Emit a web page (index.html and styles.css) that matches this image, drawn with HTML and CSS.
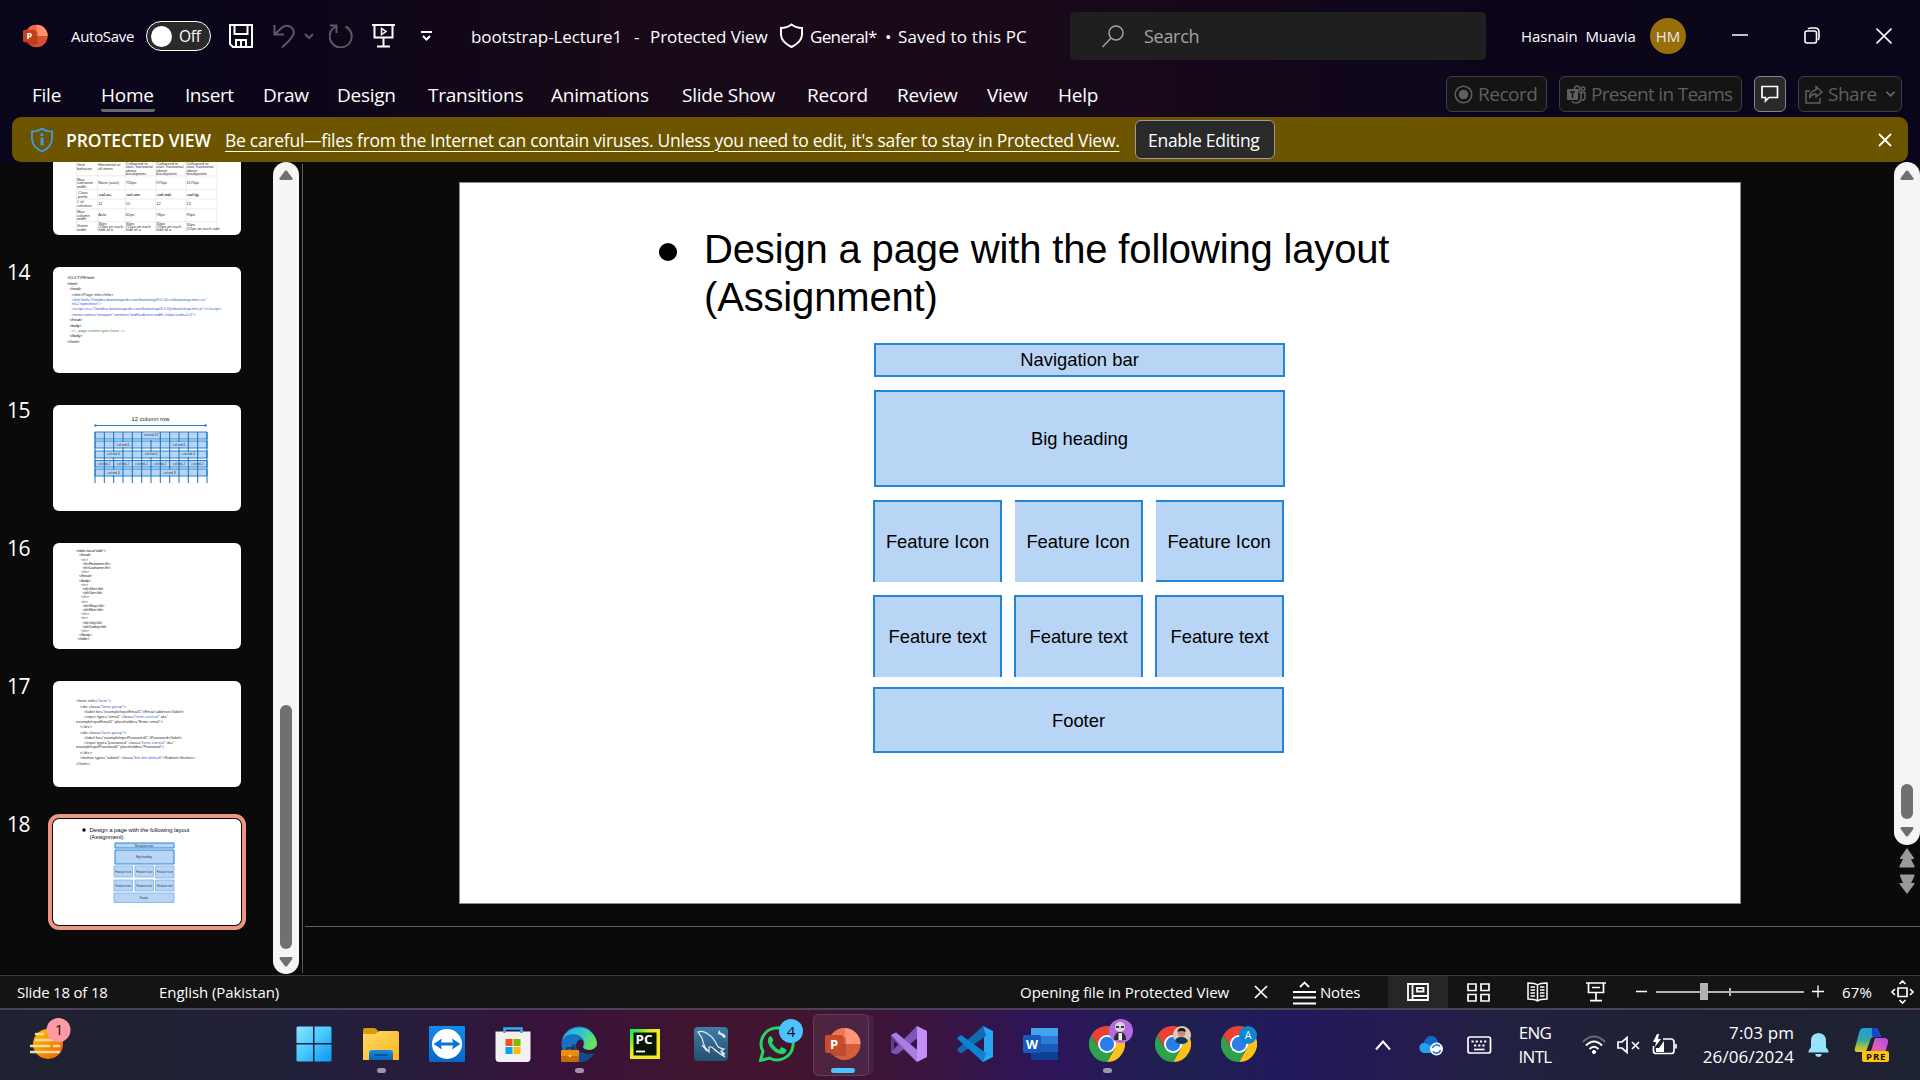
FILE: index.html
```html
<!DOCTYPE html>
<html lang="en">
<head>
<meta charset="utf-8">
<title>bootstrap-Lecture1 - PowerPoint</title>
<link rel="stylesheet" href="styles.css">
</head>
<body>
<svg class="defs" width="0" height="0" aria-hidden="true">
  <defs>
    <linearGradient id="gWin" x1="0" y1="0" x2="1" y2="1"><stop offset="0" stop-color="#8be3ff"/><stop offset=".5" stop-color="#45c8ff"/><stop offset="1" stop-color="#0b93f5"/></linearGradient>
    <linearGradient id="gFolder" x1="0" y1="0" x2="1" y2="1"><stop offset="0" stop-color="#ffd968"/><stop offset="1" stop-color="#f9b51c"/></linearGradient>
    <linearGradient id="gFolderBlue" x1="0" y1="0" x2="0" y2="1"><stop offset="0" stop-color="#1a8fe0"/><stop offset="1" stop-color="#0d62b5"/></linearGradient>
    <linearGradient id="gTv" x1="0" y1="0" x2="0" y2="1"><stop offset="0" stop-color="#0f8cf0"/><stop offset="1" stop-color="#0766c8"/></linearGradient>
    <linearGradient id="gEdge" x1="0" y1="0" x2="1" y2=".5"><stop offset="0" stop-color="#28a8f0"/><stop offset=".5" stop-color="#32c4cf"/><stop offset="1" stop-color="#66e35c"/></linearGradient>
    <linearGradient id="gPc" x1="0" y1="0" x2="1" y2="1"><stop offset="0" stop-color="#21d789"/><stop offset=".15" stop-color="#3df03a"/><stop offset=".4" stop-color="#e8ee2a"/><stop offset="1" stop-color="#f5e722"/></linearGradient>
    <linearGradient id="gSql" x1="0" y1="0" x2="0" y2="1"><stop offset="0" stop-color="#3f7ca8"/><stop offset="1" stop-color="#244f70"/></linearGradient>
    <linearGradient id="gSun" x1="0" y1="0" x2="1" y2="1"><stop offset="0" stop-color="#ffc400"/><stop offset="1" stop-color="#e85f00"/></linearGradient>
    <linearGradient id="gCopA" x1="0" y1="0" x2="0" y2="1"><stop offset="0" stop-color="#1d9be8"/><stop offset=".5" stop-color="#3aa79b"/><stop offset=".8" stop-color="#a6c63d"/><stop offset="1" stop-color="#f7c52b"/></linearGradient>
    <linearGradient id="gCopB" x1="1" y1="0" x2="0" y2="1"><stop offset="0" stop-color="#a64ce8"/><stop offset=".5" stop-color="#d95cc0"/><stop offset="1" stop-color="#ff6b6b"/></linearGradient>
    <symbol id="chrome" viewBox="0 0 36 36">
      <path d="M18 9H33.6A18 18 0 0 1 18 36L25.8 22.5Z" fill="#fcc21b"/>
      <path d="M2.4 9L10.2 22.5L25.8 22.5L18 36A18 18 0 0 1 2.4 9Z" fill="#2fa04c"/>
      <path d="M2.4 9A18 18 0 0 1 33.6 9H18L10.2 22.5Z" fill="#ea4335"/>
      <circle cx="18" cy="18" r="9" fill="#fff"/><circle cx="18" cy="18" r="7.2" fill="#2b7de9"/>
    </symbol>
    <symbol id="ppt" viewBox="0 0 36 34">
      <circle cx="19.5" cy="17" r="16" fill="#d35230"/>
      <path d="M19.5 1A16 16 0 0 0 3.5 17H19.5Z" fill="#ed6c47"/>
      <path d="M19.5 1A16 16 0 0 1 35.5 17H19.5Z" fill="#ff8f6b"/>
      <rect x="5" y="10" width="16" height="19" rx="2" fill="#8a2a12" opacity=".45"/>
      <rect x="0" y="8" width="18" height="18" rx="2" fill="#c43e1c"/>
      <text x="9" y="21.5" text-anchor="middle" class="glyph" font-size="13" fill="#fff">P</text>
    </symbol>
    <symbol id="arrowUp" viewBox="0 0 14 10"><path d="M6 .8Q7 0 8 .8L13.5 8.3Q13.6 10 12.5 10H1.5Q.4 10 .5 8.3Z" fill="#6f6f6f"/></symbol>
    <symbol id="arrowDown" viewBox="0 0 14 10"><path d="M6 9.2Q7 10 8 9.2L13.5 1.7Q13.6 0 12.5 0H1.5Q.4 0 .5 1.7Z" fill="#6f6f6f"/></symbol>
  </defs>
</svg>

<div class="window">
  <header class="top">
    <div class="titlebar">
      <svg width="25" height="24" viewBox="0 0 36 34" preserveAspectRatio="none"><use href="#ppt" width="36" height="34"/></svg>
      <span class="t-autosave">AutoSave</span>
      <span class="toggle"><i class="knob"></i><span>Off</span></span>
      <svg width="24" height="24" fill="none" stroke="#fff" stroke-width="2"><path d="M1 1H23V23H4L1 20Z"/><path d="M5.5 1V10H18.5V1M7 23V16H17V23M12 17V23"/></svg>
      <svg width="42" height="24" fill="none" stroke="#5d5965" stroke-width="2"><path d="M1.5 1V10.5H11M1.5 10.5L9 3.5Q13 .5 17 2.5Q21.500 5 20.5 10Q19.5 14 9 23.5M32 10L36 14L40 10"/></svg>
      <svg width="24" height="24" fill="none" stroke="#5d5965" stroke-width="2"><path d="M16.5 2.5A11 11 0 1 1 6 3M1 1.5H7.5V9"/></svg>
      <svg width="24" height="24" fill="none" stroke="#fff" stroke-width="2"><path d="M0 1H23M2.5 1V13.5H20.5V1M11.5 14V22M5 22.5H18"/><path d="M9.5 4.5V10.5L14 7.5Z" stroke-width="1.5"/></svg>
      <svg width="12" height="12" fill="none" stroke="#fff" stroke-width="2"><path d="M0 2H11M2 6L5.5 9.5L9 6"/></svg>
      <span class="doc name">bootstrap-Lecture1</span>
      <span class="doc">-</span>
      <span class="doc mode">Protected View</span>
      <svg width="24" height="26" fill="none" stroke="#fff" stroke-width="2"><path d="M11.5 1.5Q7 5 1 5V12Q1.500 19 11.5 24Q21.500 19 22 12V5Q16 5 11.5 1.5Z"/></svg>
      <span class="doc label">General*</span>
      <span class="doc">•</span>
      <span class="doc saved">Saved to this PC</span>
      <div class="search">
        <svg width="22" height="23" fill="none" stroke="#a3a3a3" stroke-width="1.5"><circle cx="14" cy="8" r="7"/><path d="M9 13L.5 22"/></svg>
        <span>Search</span>
      </div>
      <span class="user">Hasnain&nbsp; Muavia</span>
      <span class="avatar">HM</span>
      <svg width="16" height="18" stroke="#fff" stroke-width="1.5"><path d="M0 8H16"/></svg>
      <svg width="16" height="18" fill="none" stroke="#fff" stroke-width="1.6"><rect x="1" y="4" width="11.5" height="12" rx="2"/><path d="M4 2Q5 1 7 1H11Q15 1 15 5V10Q15 12 14 13"/></svg>
      <svg width="16" height="18" stroke="#fff" stroke-width="1.6"><path d="M.5 1.5L15.5 16.5M15.5 1.5L.5 16.5"/></svg>
    </div>

    <nav class="tabs">
      <span>File</span><span class="active">Home</span><span class="insert">Insert</span><span>Draw</span><span>Design</span><span>Transitions</span><span>Animations</span><span>Slide Show</span><span>Record</span><span>Review</span><span>View</span><span>Help</span>
      <div class="actions">
        <span class="btn b-rec"><svg width="19" height="19"><circle cx="9.5" cy="9.5" r="8.3" fill="none" stroke="#5f5f5f" stroke-width="1.5"/><circle cx="9.5" cy="9.5" r="4.8" fill="#5f5f5f"/></svg>Record</span>
        <span class="btn b-teams"><svg width="19" height="19"><g fill="none" stroke="#5f5f5f" stroke-width="1.5"><circle cx="10" cy="3.5" r="2.5"/><circle cx="16" cy="3.8" r="1.8"/><path d="M12 7.5H18V12Q18 15 15 15.5M12 7H14V14Q13 18 9 18Q6 18 5 16"/></g><rect x="0" y="4" width="11" height="11" rx="1" fill="#5f5f5f"/><path d="M3 7H8M5.5 7V13" stroke="#141414" stroke-width="1.5"/></svg>Present in Teams</span>
        <span class="btn b-comment"><svg width="18" height="18" fill="none" stroke="#fff" stroke-width="1.7"><path d="M1 1.5H16.5V12.5H8L4.5 16V12.5H1Z"/></svg></span>
        <span class="btn b-share"><svg width="18" height="19" fill="none" stroke="#5f5f5f" stroke-width="1.5"><path d="M5 6H1V18H15V13M11 1.5L17 7L11 12V9Q7 9 4.5 13Q5 6 11 5Z"/></svg>Share<svg class="chev" width="9" height="6" fill="none" stroke="#6a6a6a" stroke-width="1.6"><path d="M.5 .8L4.5 4.8L8.5 .8"/></svg></span>
      </div>
    </nav>

    <div class="banner">
      <svg width="23" height="26" fill="none" stroke="#3f9ad6" stroke-width="1.9"><path d="M11 1.5Q7 4.5 1 4.5V12Q1.500 20 11 24.5Q20.500 20 21 12V4.5Q15 4.5 11 1.5Z"/><path d="M11 10.5V18.5M11 6.5V9" stroke-width="3"/></svg>
      <b>PROTECTED VIEW</b>
      <span class="warn">Be careful—files from the Internet can contain viruses. Unless you need to edit, it's safer to stay in Protected View.</span>
      <span class="enable">Enable Editing</span>
      <svg width="14" height="14" stroke="#fff" stroke-width="1.8"><path d="M1 1L13 13M13 1L1 13"/></svg>
    </div>
  </header>

  <main class="work">
    <aside class="thumbs">
      <div class="row first"><span></span>
        <svg class="thumb cut" viewBox="0 0 188 74">
          <g stroke="#e4e4e4" stroke-width=".7" fill="none"><path d="M22.5 0V70M44 0V70M72 0V70M103 0V70M133.5 0V70M165 0V70M22.5 14H165M22.5 28H165M22.5 37.5H165M22.5 47.5H165M22.5 60.5H165"/></g>
          <g class="tiny" font-size="4"><text x="23" y="4">Grid</text><text x="23" y="8">behavior</text><text x="44.5" y="4">Horizontal at</text><text x="44.5" y="8">all times</text>
          <text x="72.5" y="3">Collapsed to</text><text x="72.5" y="6.5">start, horizontal</text><text x="72.5" y="10">above</text><text x="72.5" y="13">breakpoints</text>
          <text x="103.5" y="3">Collapsed to</text><text x="103.5" y="6.5">start, horizontal</text><text x="103.5" y="10">above</text><text x="103.5" y="13">breakpoints</text>
          <text x="134" y="3">Collapsed to</text><text x="134" y="6.5">start, horizontal</text><text x="134" y="10">above</text><text x="134" y="13">breakpoints</text>
          <text x="23" y="19">Max</text><text x="23" y="22.5">container</text><text x="23" y="26">width</text><text x="44.5" y="22.5">None (auto)</text><text x="72.5" y="22.5">750px</text><text x="103.5" y="22.5">970px</text><text x="134" y="22.5">1170px</text>
          <text x="24" y="32">Class</text><text x="24" y="36">prefix</text><g font-weight="700"><text x="44.5" y="34">.col-xs-</text><text x="72.5" y="34">.col-sm-</text><text x="103.5" y="34">.col-md-</text><text x="134" y="34">.col-lg-</text></g>
          <text x="23" y="42"># of</text><text x="23" y="45.5">columns</text><text x="44.5" y="44">12</text><text x="72.5" y="44">12</text><text x="103.5" y="44">12</text><text x="134" y="44">12</text>
          <text x="23" y="52">Max</text><text x="23" y="55.5">column</text><text x="23" y="59">width</text><text x="44.5" y="55">Auto</text><text x="72.5" y="55">62px</text><text x="103.5" y="55">78px</text><text x="134" y="55">95px</text>
          <text x="23" y="66">Gutter</text><text x="23" y="70">width</text><text x="44.5" y="64">30px</text><text x="44.5" y="67">(15px on each</text><text x="44.5" y="70">side of a</text><text x="72.5" y="64">30px</text><text x="72.5" y="67">(15px on each</text><text x="72.5" y="70">side of a</text><text x="103.5" y="64">30px</text><text x="103.5" y="67">(15px on each</text><text x="103.5" y="70">side of a</text><text x="134" y="65">30px</text><text x="134" y="69">(15px on each side</text></g>
        </svg></div>
      <div class="row"><span>14</span>
        <svg class="thumb" viewBox="0 0 188 106"><g class="tiny" font-size="4.2">
          <text x="14" y="11.5" textLength="28">&lt;!DOCTYPE html&gt;</text><text x="14" y="17.5" textLength="11">&lt;html&gt;</text><text x="16.5" y="22.5" textLength="12">&lt;head&gt;</text><text x="18.5" y="28.5" textLength="42">&lt;title&gt;Page title&lt;/title&gt;</text>
          <g fill="#3a68cf"><text x="18.5" y="33.7" textLength="135">&lt;link href="//netdna.bootstrapcdn.com/bootstrap/3.0.0/css/bootstrap.min.css"</text><text x="18.5" y="37.7" textLength="30">rel="stylesheet"&gt;</text><text x="18.5" y="43" textLength="150">&lt;script src="//netdna.bootstrapcdn.com/bootstrap/3.0.0/js/bootstrap.min.js"&gt;&lt;/script&gt;</text><text x="18.5" y="48.7" textLength="124">&lt;meta name="viewport" content="width=device-width, initial-scale=1.0"&gt;</text></g>
          <text x="16.5" y="54" textLength="13">&lt;/head&gt;</text><text x="16.5" y="59.5" textLength="12">&lt;body&gt;</text><text x="18.5" y="65" textLength="53" fill="#4c9440">&lt;!-- page content goes here --&gt;</text><text x="16.5" y="70" textLength="13">&lt;/body&gt;</text><text x="14" y="76" textLength="13">&lt;/html&gt;</text></g></svg></div>
      <div class="row"><span>15</span>
        <svg class="thumb" viewBox="0 0 188 106">
          <text x="78.5" y="15.5" font-size="5.8" textLength="38" fill="#222">12 column row</text>
          <path d="M42 20.5H153" stroke="#2286d8"/><circle cx="42.5" cy="20.5" r="1.3" fill="#2286d8"/><circle cx="152.5" cy="20.5" r="1.3" fill="#2286d8"/>
          <g fill="#b9d5f5" stroke="#2286d8"><path d="M42 27H154V34H42ZM42 36H154V43H42ZM42 46H154V53H42ZM42 55.5H154V62H42ZM42 64H154V71H42Z"/></g>
          <path d="M42 27V78M51.3 27V78M60.7 27V78M70 27V78M79.3 27V78M88.7 27V78M98 35V78M107.3 27V78M116.7 27V78M126 27V78M135.3 27V78M144.7 27V78M154 27V78" stroke="#1a6db5"/>
          <g fill="#b9d5f5"><path d="M91 27.5H105V33H91ZM64 37H77V42H64ZM120 37H133V42H120ZM54 47H67V52H54ZM91 47H105V52H91ZM129 47H142V52H129ZM54 65H67V70H54ZM110 65H123V70H110Z"/></g>
          <g class="tiny" font-size="3.2" text-anchor="middle"><text x="98" y="31">col-md-12</text><text x="70" y="41">col-md-6</text><text x="126" y="41">col-md-6</text><text x="60.5" y="50">col-md-4</text><text x="98" y="50">col-md-4</text><text x="135.5" y="50">col-md-4</text><text x="51" y="60">col-md-2</text><text x="70" y="60">col-md-2</text><text x="88.5" y="60">col-md-2</text><text x="107" y="60">col-md-2</text><text x="126" y="60">col-md-2</text><text x="144.5" y="60">col-md-2</text><text x="60.5" y="69">col-md-4</text><text x="116.5" y="69">col-md-8</text></g></svg></div>
      <div class="row"><span>16</span>
        <svg class="thumb" viewBox="0 0 188 106"><g class="tiny" font-size="3.9">
          <text x="23" y="9" textLength="30">&lt;table class="table"&gt;</text><text x="26" y="13" textLength="12">&lt;thead&gt;</text><text x="28" y="18">&lt;tr&gt;</text><text x="29.5" y="22" textLength="28">&lt;th&gt;Firstname&lt;/th&gt;</text><text x="29.5" y="26" textLength="28">&lt;th&gt;Lastname&lt;/th&gt;</text><text x="28" y="30">&lt;/tr&gt;</text><text x="26" y="34" textLength="13">&lt;/thead&gt;</text><text x="26" y="39" textLength="12">&lt;tbody&gt;</text><text x="28" y="43">&lt;tr&gt;</text><text x="29.5" y="47" textLength="21">&lt;td&gt;John&lt;/td&gt;</text><text x="29.5" y="51" textLength="20">&lt;td&gt;Doe&lt;/td&gt;</text><text x="28" y="55">&lt;/tr&gt;</text><text x="28" y="60">&lt;tr&gt;</text><text x="29.5" y="64" textLength="22">&lt;td&gt;Mary&lt;/td&gt;</text><text x="29.5" y="68" textLength="21">&lt;td&gt;Moe&lt;/td&gt;</text><text x="28" y="72">&lt;/tr&gt;</text><text x="28" y="76">&lt;tr&gt;</text><text x="29.5" y="81" textLength="20">&lt;td&gt;July&lt;/td&gt;</text><text x="29.5" y="85" textLength="24">&lt;td&gt;Dooley&lt;/td&gt;</text><text x="28" y="89">&lt;/tr&gt;</text><text x="26" y="93" textLength="13">&lt;/tbody&gt;</text><text x="24.5" y="97" textLength="12">&lt;/table&gt;</text></g></svg></div>
      <div class="row"><span>17</span>
        <svg class="thumb" viewBox="0 0 188 106"><g class="tiny" font-size="4">
          <text x="23" y="20.5" textLength="35">&lt;form role="<tspan class="kw">form</tspan>"&gt;</text><text x="27" y="26.5" textLength="46">&lt;div class="<tspan class="kw">form-group</tspan>"&gt;</text><text x="31" y="31.5" textLength="100">&lt;label for="exampleInputEmail1"&gt;Email address&lt;/label&gt;</text><text x="31" y="36.5" textLength="84">&lt;input type="email" class="<tspan class="kw">form-control</tspan>" id="</text><text x="23" y="41.5" textLength="87">exampleInputEmail1" placeholder="Enter email"&gt;</text><text x="27" y="46.5" textLength="12">&lt;/div&gt;</text><text x="27" y="52.5" textLength="46">&lt;div class="<tspan class="kw">form-group</tspan>"&gt;</text><text x="31" y="57.5" textLength="98">&lt;label for="exampleInputPassword1"&gt;Password&lt;/label&gt;</text><text x="31" y="62.5" textLength="90">&lt;input type="password" class="<tspan class="kw">form-control</tspan>" id="</text><text x="23" y="66.7" textLength="88">exampleInputPassword1" placeholder="Password"&gt;</text><text x="27" y="72.5" textLength="12">&lt;/div&gt;</text><text x="27" y="77.5" textLength="115">&lt;button type="submit" class="<tspan class="kw">btn btn-default</tspan>"&gt;Submit&lt;/button&gt;</text><text x="23" y="83.5" textLength="14">&lt;/form&gt;</text></g></svg></div>
      <div class="row"><span>18</span>
        <svg class="thumb current" viewBox="0 0 188 106">
          <circle cx="31" cy="11" r="1.7"/><g font-size="6" fill="#111"><text x="36.5" y="13" textLength="100">Design a page with the following layout</text><text x="36.5" y="20" textLength="34">(Assignment)</text></g>
          <g fill="#b9d5f5" stroke="#2286d8"><path d="M62 24H121V29H62ZM62 31H121V45H62Z"/></g>
          <g fill="#b9d5f5" stroke="#74b1ea" stroke-width=".8"><path d="M61 47H79.5V58H61ZM82 47H100.5V58H82ZM102.5 47H121V59H102.5ZM61 61H79.5V72H61ZM82 61H100.5V72H82ZM102.5 61H121V72H102.5ZM61 74H121V83.5H61Z"/></g>
          <g class="tiny" font-size="2.9" text-anchor="middle"><text x="91" y="27.7">Navigation bar</text><text x="91" y="39">Big heading</text><text x="70.3" y="53.5">Feature Icon</text><text x="91.3" y="53.5">Feature Icon</text><text x="111.8" y="53.5">Feature Icon</text><text x="70.3" y="67.5">Feature text</text><text x="91.3" y="67.5">Feature text</text><text x="111.8" y="67.5">Feature text</text><text x="91" y="80">Footer</text></g></svg></div>
    </aside>

    <div class="scroll left"><svg width="14" height="10"><use href="#arrowUp"/></svg><i class="grip"></i><svg width="14" height="10"><use href="#arrowDown"/></svg></div>
    <div class="divider"></div>

    <section class="editor">
      <div class="stage">
        <article class="slide">
          <div class="heading"><i class="dot"></i><h1>Design a page with the following layout (Assignment)</h1></div>
          <div class="wire">
            <div class="box nav">Navigation bar</div>
            <div class="box big">Big heading</div>
            <div class="box ic">Feature Icon</div><div class="box ic b">Feature Icon</div><div class="box ic c">Feature Icon</div>
            <div class="box tx">Feature text</div><div class="box tx">Feature text</div><div class="box tx">Feature text</div>
            <div class="box foot">Footer</div>
          </div>
        </article>
        <div class="rail">
          <div class="scroll right"><svg width="14" height="10"><use href="#arrowUp"/></svg><i class="grip"></i><svg width="14" height="10"><use href="#arrowDown"/></svg></div>
          <svg width="16" height="47" fill="#999"><path d="M8 0L15 10V11H12L15.5 18V19.5H.5V18L4 11H1V10ZM8 46L.5 36V35H4L1 28V26.5H15.5V28L12 35H15.5V36Z"/></svg>
        </div>
      </div>
      <div class="notes"></div>
    </section>
  </main>

  <footer class="status">
    <span>Slide 18 of 18</span>
    <span class="locale">English (Pakistan)</span>
    <span class="opening">Opening file in Protected View</span>
    <svg width="14" height="14" stroke="#fff" stroke-width="1.7"><path d="M1 1L13 13M13 1L1 13"/></svg>
    <svg width="25" height="26" fill="none" stroke="#fff" stroke-width="1.8"><path d="M8 8L12.5 3.5L17 8M1 13H24M1 18.5H24M1 24.5H24"/></svg>
    <span class="notes-label">Notes</span>
    <span class="view on"><svg width="22" height="18" fill="none" stroke="#fff" stroke-width="1.8"><path d="M1 1H21V17H1ZM5.5 1V17M5.5 13H21M10 5H16.5V8.5H10Z"/></svg></span>
    <span class="view"><svg width="23" height="19" fill="none" stroke="#fff" stroke-width="1.7"><path d="M1 1H9V7.5H1ZM14 1H22V7.5H14ZM1 11.5H9V18H1ZM14 11.5H22V18H14Z"/></svg></span>
    <span class="view"><svg width="21" height="20" fill="none" stroke="#fff" stroke-width="1.5"><path d="M10.5 3Q8 1 1 1V17Q8 17 10.5 19Q13 17 20 17V1Q13 1 10.5 3V19M3.5 5H8M3.5 8H8M3.5 11H8M3.5 14H8M13 5H17.5M13 8H17.5M13 11H17.5M13 14H17.5"/></svg></span>
    <span class="view"><svg width="20" height="20" fill="none" stroke="#fff" stroke-width="1.7"><path d="M0 1H20M2.5 1V10.5H17.5V1M6 5.5H14M10 11V18.5M4 18.7H16"/></svg></span>
    <svg class="zoom" width="189" height="20"><path d="M0 9.5H11M176 9.5H188M182 3.5V15.5" stroke="#fff" stroke-width="1.3"/><path d="M20 10H168" stroke="#b3b3b3" stroke-width="2"/><path d="M94 6V14" stroke="#b3b3b3" stroke-width="2"/><rect x="64" y="1" width="8" height="17" fill="#b3b3b3"/></svg>
    <span class="percent">67%</span>
    <svg width="23" height="24" fill="none" stroke="#fff" stroke-width="1.7"><path d="M7 8H16V16.5H7ZM8.5 4L11.5 1L14.5 4M8.5 20L11.5 23L14.5 20M4 9L1 12L4 15M19 9L22 12L19 15"/></svg>
  </footer>

  <footer class="taskbar">
    <div class="weather">
      <svg width="42" height="44"><circle cx="18" cy="27" r="15" fill="url(#gSun)"/><path d="M6 17H13M6 23H33M1 29H19M24 29H29M1 35H29" stroke="#f3d9a4" stroke-width="2.6" stroke-linecap="round"/><circle cx="28.5" cy="13" r="12" fill="#ff99a4"/><text x="29" y="18" text-anchor="middle" font-size="15" fill="#111">1</text></svg>
    </div>
    <div class="apps">
      <span class="start"><svg width="36" height="36" fill="url(#gWin)"><path d="M.5 2Q.5 .5 2 .5H17V17H.5ZM18.5 .5H34Q35.500 .5 35.5 2V17H18.5ZM.5 18.5H17V35.5H2Q.5 35.5 .5 34ZM18.5 18.5H35.5V34Q35.500 35.5 34 35.5H18.5Z"/></svg></span>
      <span class="run"><svg width="36" height="36"><path d="M0 4Q0 2 2 2H11Q13 2 15 5L13 9H0Z" fill="#dc9a09"/><path d="M0 8H12L16 5H34Q36 5 36 7V34H0Z" fill="url(#gFolder)"/><path d="M6 34V27Q6 24 9 24H27Q30 24 30 27V34Z" fill="url(#gFolderBlue)"/><path d="M11 29H25" stroke="#0b4a86" stroke-width="1.5"/></svg></span>
      <span><svg width="36" height="36"><rect width="36" height="36" rx="1" fill="url(#gTv)"/><circle cx="18" cy="18" r="15" fill="#fff"/><path d="M4.5 18L13 12.5L12 16.5H24L23 12.5L31.5 18L23 23.5L24 19.5H12L13 23.5Z" fill="#0a74d8"/></svg></span>
      <span><svg width="36" height="36"><path d="M.5 5.5H35.5V32Q35.500 36 32 36H4Q.5 36 .5 32Z" fill="#f1f1f1"/><path d="M9.5 7V2.500H26.5V7" fill="none" stroke="#35b0ee" stroke-width="2.5"/><path d="M10.5 13H17.5V20H10.5Z" fill="#f25022"/><path d="M18.5 13H25.5V20H18.5Z" fill="#7fba00"/><path d="M10.5 21H17.5V28H10.5Z" fill="#00a4ef"/><path d="M18.5 21H25.5V28H18.5Z" fill="#ffb900"/></svg></span>
      <span class="run"><svg width="36" height="36"><circle cx="18" cy="18" r="17.5" fill="#1673c4"/><path d="M1 14A18 18 0 0 1 36 17Q36 24 29 24Q23 24 22 21Q24 19 23 15Q20 8 12 8Q5 8 1 14Z" fill="url(#gEdge)"/><path d="M15 19Q15 26 21 27.5Q28 29 34 26Q29 36 18 36Q9 32 10 23Q11 16 15 19Z" fill="#124c8c"/><path d="M15 19Q16 13 21 13.5Q24 17 21.5 20Q22 24 28 24Q33 24 35.5 20L34 27Q28 29 21 27Q15 25 15 19Z" fill="#38133c"/><path d="M6 24V22H12V24" fill="none" stroke="#4a2a08" stroke-width="1.5"/><rect x="0" y="24" width="18" height="12" rx="1" fill="#c46c08"/><rect x="0" y="24" width="18" height="6" fill="#e98e14"/><circle cx="9" cy="30" r="1.3" fill="#ffd84a"/></svg></span>
      <span><svg width="36" height="36"><rect x="3" y="3" width="30" height="30" fill="url(#gPc)"/><rect x="6.5" y="6.5" width="23" height="23" fill="#08130a"/><text x="8.5" y="18" class="glyph" font-size="12" fill="#fff" textLength="17" lengthAdjust="spacingAndGlyphs">PC</text><path d="M9 25.5H18" stroke="#fff" stroke-width="1.8"/></svg></span>
      <span><svg width="36" height="36"><rect x="1" y="1" width="34" height="34" rx="4" fill="url(#gSql)"/><path d="M5 6Q10 4 15 8Q21 12 24 19Q25 22 31 23L28 25L32 28L29 27L32 31Q24 26 21 23Q18 20 16 21L16 26L12 21Q10 17 9 12Q7 9 5 6ZM9 19L14 25" fill="none" stroke="#e6eef5" stroke-width="1.2"/><path d="M26 4L28 7L31 8L33 11L31 12L28 9L25 8Z" fill="#e6eef5"/></svg></span>
      <span><svg class="over" width="44" height="44" viewBox="0 -8 44 44"><path d="M1.5 34.5L4 25.5A16 16 0 1 1 10.5 32Z" fill="none" stroke="#25d366" stroke-width="3"/><path d="M12 10L14.5 14L13 17Q16 22 20 24L22.5 21L27.5 23.5Q27 28 23 28Q17 28 12 22Q8 17 9 13Q10 10 12 10Z" fill="#25d366"/><circle cx="32" cy="5" r="12" fill="#4cc2ff"/><text x="32" y="10.5" text-anchor="middle" font-size="15" fill="#111">4</text></svg></span>
      <span class="focus"><svg width="36" height="34"><use href="#ppt" width="36" height="34"/></svg></span>
      <span><svg width="36" height="36"><path d="M0 9L5 6.5L29 27L26 36L2 14V25L8 20L3 28L0 26Z" fill="#6c4aa0"/><path d="M0 9L5 6.5L10 11L3 15V23L5 28L0 26Z" fill="#5a3f8c"/><path d="M26 0L29 10L8 27L5 28.5L0 26Z" fill="#7d57b8"/><path d="M0 9L5 6.5L30 27L26 36Z" fill="#a87ee0"/><path d="M26 0L36 5V31L26 36Z" fill="#c490f8"/></svg></span>
      <span><svg width="36" height="36"><path d="M26 0L36 5V31L26 36L23 33L27 27V9Z" fill="#28a4f0"/><path d="M26 0L29 10L4 27.5L.5 25V23Z" fill="#0d6cb0"/><path d="M4 9L.5 11.5V13L26 36L29 27Z" fill="#0a84d0"/></svg></span>
      <span><svg width="36" height="34"><rect x="8" y="1" width="27" height="9" fill="#41a5ee"/><rect x="8" y="9" width="27" height="8" fill="#2b7cd3"/><rect x="8" y="17" width="27" height="8" fill="#185abd"/><rect x="8" y="25" width="27" height="8" fill="#103f91"/><rect x="0" y="8" width="18" height="18" rx="2" fill="#185abd"/><text x="9" y="21.5" text-anchor="middle" class="glyph" font-size="12.5" fill="#fff">W</text></svg></span>
      <span class="run"><svg class="over" width="44" height="44" viewBox="0 -8 44 44"><use href="#chrome" width="36" height="36"/><circle cx="32" cy="5" r="12" fill="#b56be0"/><path d="M25 14Q25 6 31 6Q37 6 37 14Z" fill="#2c2c30"/><path d="M29.5 7H33V14H29.5Z" fill="#f0f0f0"/><circle cx="31" cy="1" r="5" fill="#d9d9d9"/><path d="M27 1H30M32 1H35" stroke="#333" stroke-width="2"/></svg></span>
      <span><svg width="36" height="36"><use href="#chrome" width="36" height="36"/><circle cx="27" cy="9" r="9" fill="#d9cdb8"/><circle cx="26.5" cy="7" r="3.8" fill="#c98f6b"/><path d="M22.5 6Q23 1.500 27 2Q31 2 30.5 6Q26 4 22.5 6Z" fill="#1b1b1f"/><path d="M20 15Q21 11 26 11Q32 11 33 15.5Q30 18 27 18Q22 18 20 15Z" fill="#16325e"/></svg></span>
      <span><svg width="36" height="36"><use href="#chrome" width="36" height="36"/><circle cx="27" cy="9" r="9" fill="#0b88d1"/><text x="27" y="13" text-anchor="middle" font-size="10.5" fill="#fff">A</text></svg></span>
    </div>
    <div class="tray">
      <svg width="16" height="12" fill="none" stroke="#fff" stroke-width="2"><path d="M1 10.5L8 2.5L15 10.5"/></svg>
      <svg width="26" height="22"><path d="M5 19Q0 18 .5 13Q1 9 5 8.5Q7 2 12 2Q17 2 18.5 7Q22 9 21 14L12 19Z" fill="#0f6cc4"/><path d="M5 19Q0 18 .5 13Q1 9 6 9L15 13L12 19Z" fill="#28a0ea"/><circle cx="17.5" cy="15" r="6.5" fill="#fff"/><path d="M13.5 14A4.3 4.3 0 0 1 21 12.5M21.5 16A4.3 4.3 0 0 1 14 17.5" fill="none" stroke="#0f78d4" stroke-width="1.5"/></svg>
      <svg width="25" height="18" fill="none" stroke="#fff" stroke-width="1.7"><rect x="1" y="1" width="22.5" height="16" rx="2"/><path d="M4.5 5.5H20M7 9.5H18" stroke-width="2.2" stroke-dasharray="2.2 2"/><path d="M7 13.5H17.5"/></svg>
      <span class="lang">ENG<br>INTL</span>
      <svg width="24" height="20" fill="none" stroke="#fff" stroke-width="1.9"><path d="M.8 7Q12 -4 23.2 7" stroke="#6a6879"/><path d="M4 10.5Q12 2.500 20 10.5M7.5 14Q12 9.500 16.5 14"/><circle cx="12" cy="17" r="1.6" fill="#fff" stroke-width="1"/></svg>
      <svg width="24" height="18" fill="none" stroke="#fff" stroke-width="1.7"><path d="M1 6H5L10 1.5V16.5L5 12H1ZM15 6L22 13M22 6L15 13"/></svg>
      <svg width="25" height="22" fill="none" stroke="#fff" stroke-width="1.7"><path d="M11 5H19Q22 5 22 8V17Q22 19.500 19 19.5H4Q1.500 19.500 1.5 17V12M24 10V14.5"/><path d="M4 18V14H7L12 7V18Z" fill="#fff" stroke="none"/><path d="M5 0L1 8H4L3 13L9 5H6L7 0Z" fill="#fff" stroke="none"/></svg>
      <span class="clock">7:03 pm<br>26/06/2024</span>
      <svg class="bell" width="21" height="24" fill="#96e4fb"><path d="M10.5 0Q18 .5 18 8V14L20.5 18V19.5H.5V18L3 14V8Q3 .5 10.5 0ZM7 21H14Q13 24 10.5 24Q8 24 7 21Z"/></svg>
      <svg width="36" height="36"><path d="M10 1H20Q24 1 25 5L27 10H20Q17 10 16 14L13 22Q12 25 8 25H3Q0 25 1 21L5 6Q6 1 10 1Z" fill="url(#gCopA)"/><path d="M18 1H20Q24 1 25 5L27 10H20Q17 10 18 1Z" fill="#1746c8"/><path d="M21 11H30Q35 11 34 16L31 26H12Q17 26 18 21Z" fill="url(#gCopB)"/><rect x="8" y="24" width="27" height="11" rx="2" fill="#ffc20e"/><text x="12" y="33" class="glyph" font-size="9.5" fill="#111" textLength="19">PRE</text></svg>
    </div>
  </footer>
</div>
</body>
</html>
```
FILE: styles.css
```css
* { box-sizing: border-box; }
body { margin: 0; background: #0a0a0a; color: #fff; font-family: "Open Sans", "Noto Sans", sans-serif; overflow: hidden; }
.defs { position: absolute; }
svg { display: block; }
.glyph { font-family: "Open Sans", sans-serif; font-weight: 700; }
.window { width: 1920px; height: 1080px; display: grid; grid-template-rows: 162px 813px 33px 72px; }

/* Title bar, ribbon tabs and warning banner */
.top { background: linear-gradient(90deg, #09051b 0, #0c0519 300px, #170917 620px, #1a0a19 900px, #16081a 1200px, #0d061a 1480px, #0a051b 1920px); display: grid; grid-template-rows: 72px 45px 45px; }
.titlebar { display: grid; align-items: center; white-space: nowrap; padding-left: 23px;
  grid-template-columns: 48px 75px 83px 44px 56px 43px 49px 50px 163px 16px 130px 30px 75px 13px 172px 451px 129px 82px 72px 72px 24px; }
.t-autosave { font-size: 15px; letter-spacing: -.3px; }
.toggle { width: 65px; height: 30px; border: 1.5px solid #fff; border-radius: 15px; background: #2a2a2a; display: flex; align-items: center; padding-left: 4px; gap: 7px; font-size: 15.5px; letter-spacing: -.3px; }
.knob { width: 21px; height: 21px; border-radius: 50%; background: #fff; }
.doc { font-size: 17px; letter-spacing: -.35px; }
.doc.name, .doc.mode { letter-spacing: -.08px; }
.doc.label { letter-spacing: -.65px; }
.doc.saved { letter-spacing: .15px; }
.search { width: 416px; height: 48px; background: #1f1f1f; border-radius: 5px; display: flex; align-items: center; padding-left: 32px; gap: 20px; color: #a3a3a3; font-size: 18px; letter-spacing: -.3px; }
.user { font-size: 15px; letter-spacing: -.05px; }
.avatar { width: 36px; height: 36px; border-radius: 50%; background: #986f0b; display: flex; align-items: center; justify-content: center; font-size: 15px; color: #e8e8e8; }

.tabs { display: grid; white-space: nowrap; font-size: 19px; letter-spacing: -.25px; line-height: 26px; padding: 10px 0 0 32px;
  grid-template-columns: 69px 84px 78px 74px 91px 123px 131px 125px 90px 90px 71px 388px auto; }
.tabs > .active { width: 54px; height: 30px; border-bottom: 3px solid #6b6b6b; border-radius: 0 0 2px 2px; }
.tabs > .insert { letter-spacing: -.45px; }
.actions { display: flex; gap: 12px; margin-top: -6px; }
.btn { height: 36px; border: 1px solid #3f3f42; border-radius: 6px; background: #141414; color: #5f5f5f; display: flex; align-items: center; gap: 5px; padding-left: 7px; font-size: 19px; letter-spacing: -.5px; }
.b-rec { width: 101px; }
.b-teams { width: 183px; letter-spacing: -.7px; }
.b-comment { width: 32px; background: #2a2a2a; border-color: #858585; padding-left: 6px; }
.b-share { width: 104px; padding-left: 6px; }
.b-share .chev { margin-left: 4px; }
.banner { margin: 0 12px; background: #6d5500; border-radius: 9px; display: grid; align-items: center; white-space: nowrap; padding-left: 19px; grid-template-columns: 35px 159px 910px 743px 14px; font-size: 17.5px; letter-spacing: -.275px; }
.banner b { font-weight: 600; letter-spacing: -.08px; }
.warn { text-decoration: underline; text-underline-offset: 4px; text-decoration-thickness: 1px; }
.enable { width: 140px; height: 39px; border: 1px solid #9c9c9c; border-radius: 6px; background: #2a2a2a; display: flex; align-items: center; padding-left: 12px; }

/* Thumbnails, scrollbars and slide */
.work { display: grid; grid-template-columns: 273px 26px 6px 1fr; background: #0a0a0a; overflow: hidden; }
.thumbs { display: flex; flex-direction: column; gap: 32px; }
.row { display: grid; grid-template-columns: 46px 188px; padding-left: 7px; height: 106px; font: 400 21px/27px "Open Sans", sans-serif; }
.row > span { margin-top: -8px; letter-spacing: -.5px; }
.row.first { height: 73px; }
.thumb { width: 188px; height: 106px; background: #fff; border-radius: 6px; font-family: "Liberation Sans", sans-serif; }
.thumb.cut { height: 73px; border-radius: 0 0 6px 6px; }
.thumb.current { outline: 4px solid #ee9683; outline-offset: 1px; }
.tiny { fill: #333; }
.kw { fill: #3a68cf; }
.scroll { width: 26px; background: #f5f5f5; border-radius: 13px; display: flex; flex-direction: column; align-items: center; }
.scroll.left { height: 812px; padding-top: 8px; }
.grip { width: 12px; border-radius: 6px; background: #707070; }
.left .grip { height: 244px; margin: 525px 0 8px; }
.divider { width: 1px; height: 809px; margin: 2px 0 0 3px; background: #5a5a5a; }
.editor { display: grid; grid-template-rows: 764px 1fr; }
.stage { display: flex; justify-content: space-between; padding-left: 154px; }
.slide { width: 1282px; height: 722px; margin-top: 20px; border: 1px solid #8b8b8b; background: #fff; color: #000; font-family: "Liberation Sans", Arial, sans-serif; }
.heading { display: flex; padding: 42px 0 0 199px; }
.dot { width: 18px; height: 18px; border-radius: 50%; background: #000; margin: 18px 27px 0 0; }
.heading h1 { margin: 0; width: 730px; font-size: 40px; font-weight: 400; line-height: 48px; letter-spacing: -.16px; }
.wire { width: 412px; margin: 22px 0 0 413px; display: grid; grid-template-columns: 129px 129px 129px; column-gap: 12px; grid-template-rows: 34px 97px 82px 82px 66px; row-gap: 13px; }
.box { background: #b9d5f5; border: 2px solid #2286d8; display: flex; align-items: center; justify-content: center; font-size: 18.4px; white-space: nowrap; }
.nav, .big { grid-column: 1 / 4; margin: 0 -1px 0 1px; }
.foot { grid-column: 1 / 4; margin: -3px 0 3px; padding-top: 1px; }
.ic, .tx { border-bottom: 0; }
.ic.b, .ic.c { border-left: 0; margin-left: 1px; }
.ic.c { border-bottom: 2px solid #2286d8; padding-top: 2px; }
.rail { display: flex; flex-direction: column; align-items: center; gap: 3px; }
.scroll.right { height: 683px; padding-top: 8px; }
.right .grip { height: 35px; margin: 604px 0 8px; }
.notes { border-top: 1px solid #5e5e5e; }

/* Status bar */
.status { background: #141414; border-top: 1px solid #3c3c3c; display: grid; align-items: center; white-space: nowrap; padding-left: 17px; font-size: 15px; letter-spacing: -.2px;
  grid-template-columns: 142px 861px 234px 38px 28px 68px 60px 60px 58px 60px 10px 206px 49px 29px; }
.locale { letter-spacing: -.07px; }
.opening { letter-spacing: -.03px; }
.percent { letter-spacing: .2px; }
.view { height: 32px; display: flex; align-items: center; justify-content: center; }
.view.on { background: #262626; }
.zoom { grid-column: 12; }

/* Taskbar */
.taskbar { border-top: 2px solid #4c4359; display: flex; background: linear-gradient(90deg, #202130 0, #21203a 300px, #2a1b3b 440px, #38123c 545px, #401530 700px, #42152f 800px, #39143f 930px, #2c155a 1050px, #1f2050 1180px, #21195c 1290px, #241b50 1400px, #212040 1500px, #1f2033 1700px, #1d2231 1920px); }
.weather { width: 282px; padding: 7px 0 0 30px; }
.apps { width: 1093px; display: flex; padding-top: 4px; }
.apps > span { width: 66px; height: 60px; display: flex; flex-direction: column; align-items: center; justify-content: center; position: relative; flex: none; }
.apps > .start { padding-right: 3px; }
.over { margin: -8px 0 0 15px; align-self: flex-start; }
.run::after, .focus::after { content: ""; position: absolute; left: 29px; bottom: 1px; width: 9px; height: 5px; border-radius: 3px; background: #9d93ab; }
.focus::before { content: ""; position: absolute; left: 3px; top: 0; width: 54px; height: 60px; border-radius: 6px; border: 1px solid #ffffff20; background: #ffffff12; box-shadow: 6px 0 0 -1px #ffffff0c; }
.focus::after { left: 21px; width: 24px; background: #4cc2ff; }
.tray { display: grid; align-items: center; white-space: nowrap; font-size: 17px; line-height: 23.5px; letter-spacing: -.4px; width: 517px; margin-top: -1px;
  grid-template-columns: 44px 48px 38px 77px 35px 35px 42px 100px 60px 36px; }
.lang { width: 60px; text-align: center; letter-spacing: -.7px; }
.clock { text-align: right; letter-spacing: .1px; }
.bell { margin-left: 14px; }
```
